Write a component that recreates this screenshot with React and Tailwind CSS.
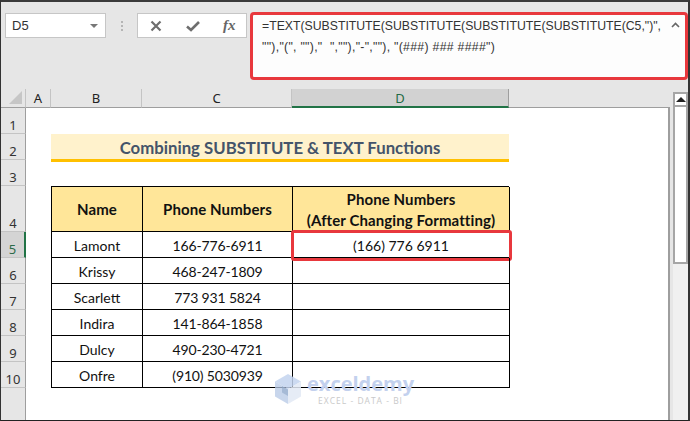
import React from "react";

const rows = [
  ["1", 26], ["2", 26], ["3", 26], ["4", 46], ["5", 26], ["6", 26], ["7", 26], ["8", 26], ["9", 26], ["10", 26],
];

const data = [
  ["Lamont", "166-776-6911", "(166) 776 6911"],
  ["Krissy", "468-247-1809", ""],
  ["Scarlett", "773 931 5824", ""],
  ["Indira", "141-864-1858", ""],
  ["Dulcy", "490-230-4721", ""],
  ["Onfre", "(910) 5030939", ""],
];

const lato = "font-['Lato','Carlito',sans-serif]";

function RowHeader({ label, height }) {
  const selected = label === "5";
  return (
    <div
      style={{ height }}
      className={`flex items-end justify-center border-b border-[#c4c4c4] text-[13px] leading-[16px] ${
        selected
          ? "bg-[#d4d4d4] text-[#2b6a48] border-r-2 border-r-[#217346]"
          : "bg-[#e6e6e6] text-[#333] border-r border-r-[#9e9e9e]"
      } font-['Noto_Sans',sans-serif]`}
    >
      {label}
    </div>
  );
}

function ColHeader({ label, width, selected }) {
  return (
    <div
      style={{ width }}
      className={`h-full flex items-center justify-center pt-[2px] text-[13px] font-['Noto_Sans',sans-serif] ${
        selected
          ? "bg-[#d2d2d2] text-[#1f6b45] border-b-2 border-b-[#217346] border-r border-r-[#9e9e9e]"
          : "bg-[#e6e6e6] text-[#222] border-b border-b-[#9e9e9e] border-r border-r-[#c4c4c4]"
      }`}
    >
      {label}
    </div>
  );
}

function Cell({ children, bold, className = "" }) {
  return (
    <div
      className={`flex items-center justify-center border-r border-b border-black text-center leading-[21px] text-[#111] ${lato} ${
        bold ? "font-bold bg-[#ffe699] text-[15px] tracking-[0.1px]" : "text-[14px]"
      } ${className}`}
    >
      {children}
    </div>
  );
}

function Watermark() {
  return (
    <div className="absolute left-[248px] top-[265px] flex items-start gap-[5px] pointer-events-none">
      <svg width="28" height="32" viewBox="0 0 28 32" className="shrink-0">
        <polygon points="14,1 27,8.5 14,16 1,8.5" fill="#c3d3ee" fillOpacity="0.85" />
        <polygon points="1,8.5 14,16 14,31 1,23.5" fill="#b6c8e6" fillOpacity="0.75" />
        <polygon points="27,8.5 14,16 14,31 27,23.5" fill="#e2e9f5" fillOpacity="0.85" />
        <polygon points="8,13 14,16.5 14,23 8,19.5" fill="#8fa6c8" fillOpacity="0.6" />
      </svg>
      <div className="flex flex-col items-center shrink-0 pt-[1px]">
        <span className="font-['Open_Sans',sans-serif] font-bold text-[20px] leading-[20px] text-[#c3d1ee]">
          exceldemy
        </span>
        <span className="font-['Open_Sans',sans-serif] text-[8.5px] leading-[10px] tracking-[1px] text-[#c9c9c9] mt-[2px]">
          EXCEL - DATA - BI
        </span>
      </div>
    </div>
  );
}

export default function App() {
  return (
    <div className="w-[690px] h-[421px] flex flex-col overflow-hidden bg-[#e6e6e6] border-t-2 border-t-[#3a3a3a] border-l border-l-[#333] border-r-2 border-r-[#333] border-b border-b-[#222]">
      <div className="h-[87px] shrink-0 flex items-start pl-[4px] pt-[11px]">
        <div className="w-[101px] h-[25px] bg-white border border-[#c6c6c6] flex items-center justify-between pl-[6px] pr-[7px] text-[13px] text-[#333] font-['Liberation_Sans',sans-serif]">
          <span>D5</span>
          <span className="w-0 h-0 border-l-[4px] border-r-[4px] border-t-[4px] border-l-transparent border-r-transparent border-t-[#777]" />
        </div>
        <div className="w-[2px] ml-[15px] mr-[14px] mt-[8px] flex flex-col gap-[2px]">
          <span className="h-[2px] bg-[#b5b5b5]" />
          <span className="h-[2px] bg-[#b5b5b5]" />
          <span className="h-[2px] bg-[#b5b5b5]" />
        </div>
        <div className="w-[110px] h-[25px] bg-white border border-[#c6c6c6] flex items-center pl-[12px]">
          <svg width="12" height="12" viewBox="0 0 12 12" className="shrink-0">
            <path d="M1.5 1.5 L10.5 10.5 M10.5 1.5 L1.5 10.5" stroke="#6e6e6e" strokeWidth="2.2" />
          </svg>
          <svg width="14" height="12" viewBox="0 0 14 12" className="shrink-0 ml-[24px]">
            <path d="M1 6.5 L5 10 L13 2" stroke="#6e6e6e" strokeWidth="2.6" fill="none" />
          </svg>
          <span className="ml-[23px] font-['Liberation_Serif',serif] italic font-bold text-[15px] leading-none text-[#666]">
            fx
          </span>
        </div>
        <div className="relative ml-[3px] -mt-px w-[438px] h-[68px] rounded-[4px] border-[3px] border-[#e8383d] bg-[#fdfdfd] pl-[9px] pt-[1px] font-['Liberation_Sans',sans-serif] text-[12.25px] leading-[21px] text-[#333] whitespace-pre">
          <div>{'=TEXT(SUBSTITUTE(SUBSTITUTE(SUBSTITUTE(SUBSTITUTE(C5,")",'}</div>
          <div className="tracking-[0.3px]">{'""),"(", ""),"  ",""),"-",""), "(###) ### ####")'}</div>
          <svg width="9" height="6" viewBox="0 0 9 6" className="absolute right-[5px] top-[7px]">
            <path d="M1 5 L4.5 1.5 L8 5" stroke="#666" strokeWidth="1.6" fill="none" />
          </svg>
        </div>
      </div>

      <div className="flex-1 flex min-h-0">
        <div className="w-[670px] flex flex-col">
          <div className="h-[19px] shrink-0 flex">
            <div className="w-[25px] h-full bg-[#e6e6e6] border-b border-b-[#9e9e9e] border-r border-r-[#c4c4c4] flex items-end justify-end pb-[3px] pr-[3px]">
              <svg width="13" height="13" viewBox="0 0 13 13">
                <polygon points="13,0 13,13 0,13" fill="#c6c6c6" />
              </svg>
            </div>
            <ColHeader label="A" width={25} />
            <ColHeader label="B" width={91} />
            <ColHeader label="C" width={150} />
            <ColHeader label="D" width={217} selected />
            <div className="flex-1 h-full border-b border-b-[#9e9e9e]" />
          </div>
          <div className="flex-1 flex min-h-0 border-r-2 border-r-[#9e9e9e]">
            <div className="w-[25px] shrink-0 flex flex-col">
              {rows.map(([label, height]) => (
                <RowHeader key={label} label={label} height={height} />
              ))}
              <div className="flex-1 border-r border-r-[#9e9e9e]" />
            </div>
            <div className="relative flex-1 bg-white pt-[26px] pl-[25px]">
              <div className="w-[458px] h-[28px] pt-[2px] bg-[#fff2cc] border-b-[3px] border-b-[#ffc000] flex items-center justify-center font-bold text-[16.75px] leading-[24px] text-[#44546a] font-['Lato','Carlito',sans-serif]">
                Combining SUBSTITUTE &amp; TEXT Functions
              </div>
              <div className="mt-[24px] w-[458px] grid grid-cols-[91px_150px_217px] border-t border-l border-black">
                <Cell bold className="h-[45px]">Name</Cell>
                <Cell bold className="h-[45px]">Phone Numbers</Cell>
                <Cell bold className="h-[45px] pt-[2px]">
                  <span>
                    Phone Numbers
                    <br />
                    (After Changing Formatting)
                  </span>
                </Cell>
                {data.map((row) => (
                  <React.Fragment key={row[0]}>
                    <Cell className="h-[26px] pt-[2px] text-[14.5px]">{row[0]}</Cell>
                    <Cell className="h-[26px] pt-[2px] tracking-[-0.15px]">{row[1]}</Cell>
                    <Cell className="h-[26px] pt-[2px] relative">
                      {row[2]}
                      {row[2] && (
                        <span className="absolute -left-[2px] -top-[2px] w-[221px] h-[31px] border-[3px] border-[#e8383d] rounded-[3px]" />
                      )}
                    </Cell>
                  </React.Fragment>
                ))}
              </div>
              <Watermark />
            </div>
          </div>
        </div>
        <div className="flex-1 pl-[3px] flex flex-col">
          <div className="mt-[3px] h-[172px] w-[15px] bg-white border-2 border-[#a6a6a6] flex flex-col">
            <div className="h-[13px] border-b-2 border-[#a6a6a6] flex items-center justify-center">
              <span className="w-0 h-0 border-l-[5px] border-r-[5px] border-b-[5px] border-l-transparent border-r-transparent border-b-[#222]" />
            </div>
          </div>
          <div className="flex-1 w-[15px] bg-[#f0f0f0]" />
        </div>
      </div>
    </div>
  );
}
